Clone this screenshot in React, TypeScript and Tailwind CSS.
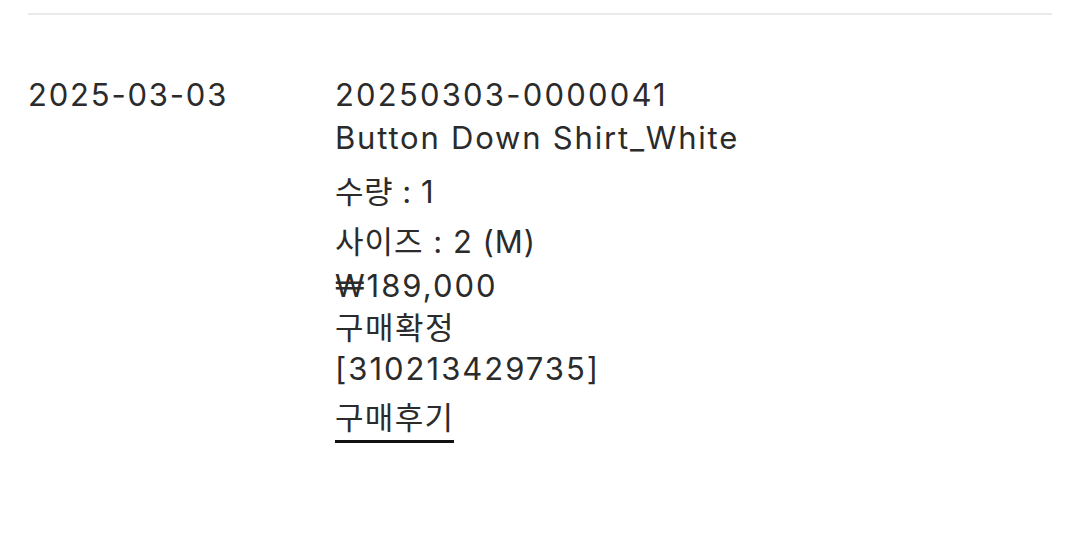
const order = {
	date: '2025-03-03',
	number: '20250303-0000041',
	name: 'Button Down Shirt_White',
	quantity: 1,
	size: '2 (M)',
	price: '₩189,000',
	status: '구매확정',
	invoice: '[310213429735]',
};

export default function App() {
	return (
		<div className="min-h-[559px] bg-white font-['Inter','Noto_Sans_CJK_KR',sans-serif] text-[31px] leading-[44px] text-[#2b2b2b]">
			<div className="px-[28px] pt-[13px]">
				<div className="h-[1.5px] bg-[#ebebeb]" />

				{/* Order row */}
				<div className="mt-[58px] grid grid-cols-[307px_1fr]">
					<div className="tracking-[1.8px]">{order.date}</div>
					<div className="flex flex-col items-start">
						<div className="tracking-[2.2px]">{order.number}</div>
						<div className="-mt-[1px] tracking-[1.8px]">{order.name}</div>
						<div className="mt-[10px] tracking-[0.5px]">수량 : {order.quantity}</div>
						<div className="mt-[6px] tracking-[1px]">사이즈 : {order.size}</div>
						<div className="tracking-[2px]">{order.price}</div>
						<div className="-mt-[2px] tracking-[1.5px]">{order.status}</div>
						<div className="-mt-[3px] tracking-[2px]">{order.invoice}</div>
						<a href="#" className="mt-[5px] inline-block border-b-[3px] border-[#111] tracking-[1.3px]">
							구매후기
						</a>
					</div>
				</div>
			</div>
		</div>
	);
}
